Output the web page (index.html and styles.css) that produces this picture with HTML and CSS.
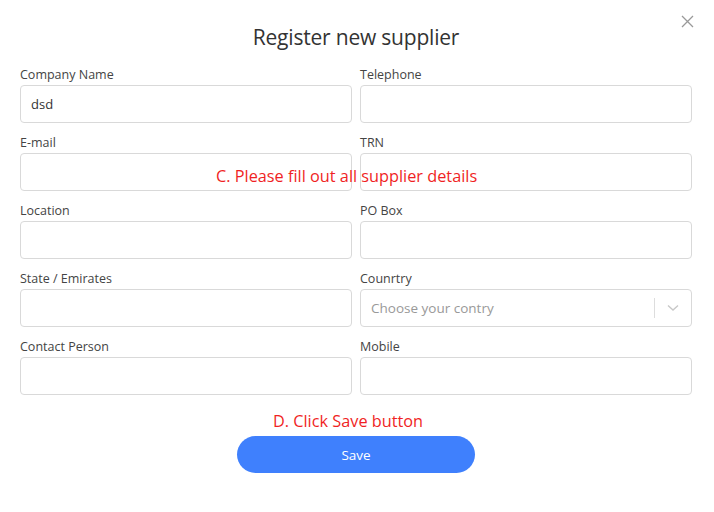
FILE: index.html
```html
<!DOCTYPE html>
<html lang="en">
<head>
  <meta charset="UTF-8" />
  <meta name="viewport" content="width=device-width, initial-scale=1.0"/>
  <title>Register new supplier</title>
  <link rel="stylesheet" href="styles.css">
</head>
<body>

<div class="modal">
  <button class="close" aria-label="Close">
    <svg width="13" height="13" viewBox="0 0 13 13"><path d="M1 1L12 12M12 1L1 12" stroke="#999" stroke-width="1.3" fill="none"/></svg>
  </button>
  <h2>Register new supplier</h2>

  <div class="grid">
    <div class="field">
      <label>Company Name</label>
      <input type="text" value="dsd" />
    </div>
    <div class="field">
      <label>Telephone</label>
      <input type="text" />
    </div>
    <div class="field">
      <label>E-mail</label>
      <input type="text" />
    </div>
    <div class="field">
      <label>TRN</label>
      <input type="text" />
    </div>
    <div class="field">
      <label>Location</label>
      <input type="text" />
    </div>
    <div class="field">
      <label>PO Box</label>
      <input type="text" />
    </div>
    <div class="field">
      <label>State / Emirates</label>
      <input type="text" />
    </div>
    <div class="field">
      <label>Counrtry</label>
      <div class="select">
        <span class="placeholder">Choose your contry</span>
        <span class="sep"></span>
        <svg class="chev" width="12" height="8" viewBox="0 0 12 8"><path d="M1 1.5L6 6L11 1.5" stroke="#c8c8c8" stroke-width="1.4" fill="none"/></svg>
      </div>
    </div>
    <div class="field">
      <label>Contact Person</label>
      <input type="text" />
    </div>
    <div class="field">
      <label>Mobile</label>
      <input type="text" />
    </div>
  </div>

  <div class="hint hint-c">C. Please fill out all supplier details</div>
  <div class="hint hint-d">D. Click Save button</div>
  <button class="save">Save</button>
</div>

</body>
</html>
```

FILE: styles.css
```css
body {
  margin: 0;
  background: #fff;
  font-family: "Open Sans", sans-serif;
  color: #333;
}
.modal {
  position: relative;
  width: 672px;
  padding: 24px 22px 30px 20px;
  display: flex;
  flex-direction: column;
  align-items: center;
}
.close {
  position: absolute;
  top: 15px;
  right: 20px;
  border: none;
  background: none;
  padding: 0;
  line-height: 0;
}
h2 {
  margin: 0 0 15px;
  font-size: 21px;
  line-height: 26px;
  font-weight: 400;
  color: #333;
  letter-spacing: -0.2px;
}
.grid {
  width: 100%;
  display: grid;
  grid-template-columns: 1fr 1fr;
  column-gap: 8px;
  row-gap: 10px;
}
.field {
  display: flex;
  flex-direction: column;
}
.field label {
  font-size: 12.5px;
  line-height: 18px;
  color: #444;
  padding-top: 1px;
  margin-bottom: 1px;
}
.field input,
.select {
  box-sizing: border-box;
  height: 38px;
  border: 1px solid #d9d9d9;
  border-radius: 4px;
  padding: 0 10px;
  font-family: inherit;
  font-size: 13px;
  color: #333;
  background: #fff;
}
.select {
  display: flex;
  align-items: center;
  padding-right: 12px;
}
.placeholder {
  flex: 1;
  color: #999;
  font-size: 13.5px;
}
.sep {
  width: 1px;
  height: 20px;
  background: #ddd;
  margin-right: 12px;
}
.hint {
  color: #f01f24;
  font-size: 16.3px;
  line-height: 20px;
}
.hint-c {
  position: absolute;
  left: 216px;
  top: 166px;
}
.hint-d {
  margin-top: 16px;
  margin-right: 16px;
}
.save {
  margin-top: 5px;
  width: 238px;
  height: 37px;
  border: none;
  border-radius: 19px;
  background: #3f80fd;
  color: #fff;
  font-family: inherit;
  font-size: 13.5px;
}
```
